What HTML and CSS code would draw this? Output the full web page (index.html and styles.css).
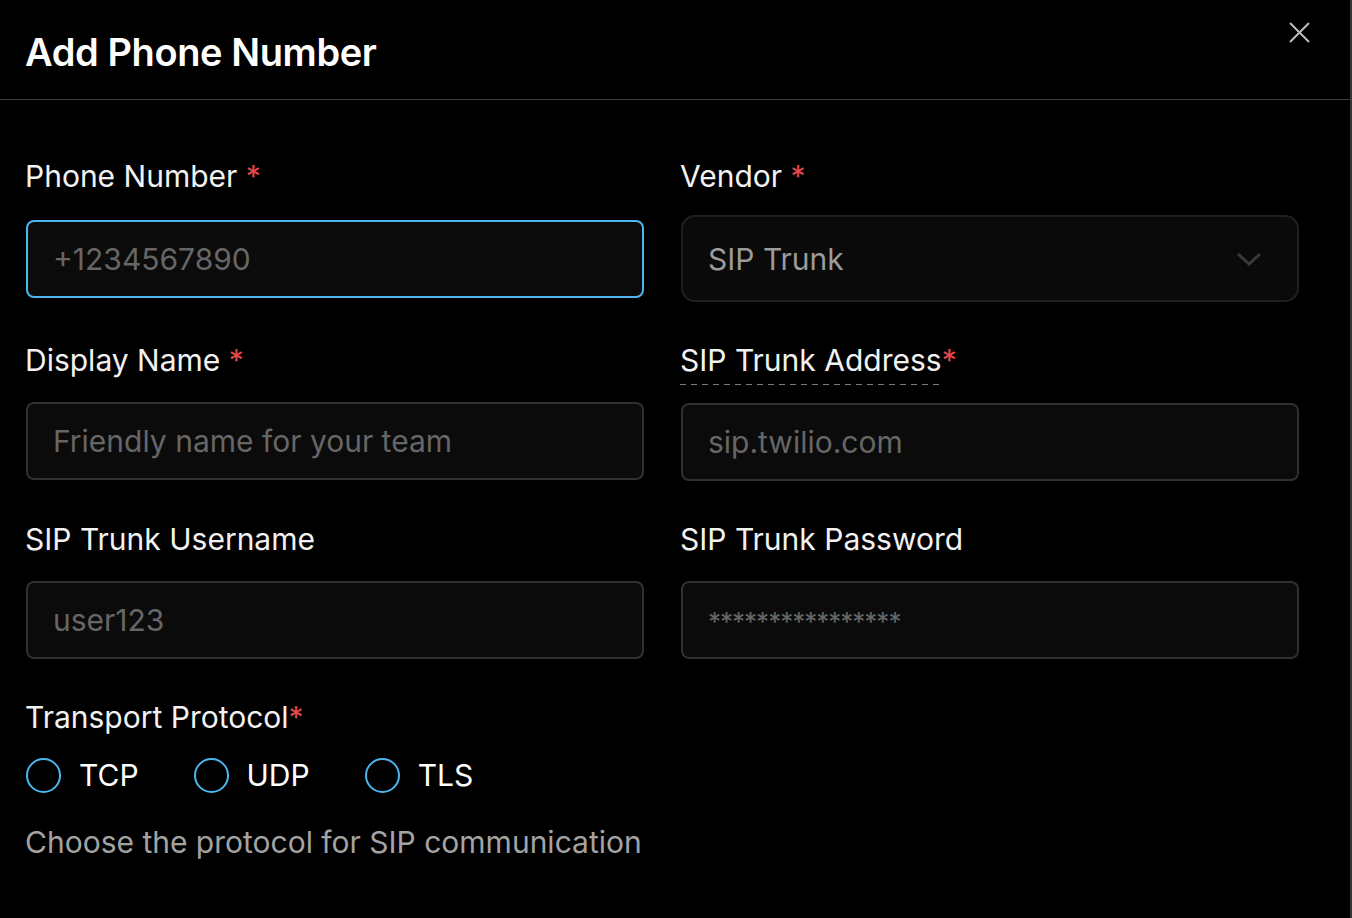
FILE: index.html
```html
<!DOCTYPE html>
<html>
    <head>
        <meta charset="utf-8" />
        <title>Add Phone Number</title>
        <link rel="stylesheet" href="styles.css">
    </head>
    <body>
        <div class="dialog">
            <div class="dialog-head">
                <h2 class="dialog-title">Add Phone Number</h2>
                <button type="button" class="close-btn" aria-label="Close">
                    <svg width="21" height="21" viewBox="0 0 21 21" fill="none">
                        <path d="M1 1L20 20M20 1L1 20" stroke="#bdbdbd" stroke-width="2"/>
                    </svg>
                </button>
            </div>
            <form class="phone-form">
                <div class="field">
                    <label class="field-label" for="phone">Phone Number <span class="req">*</span></label>
                    <input class="field-input is-focus" id="phone" type="text" placeholder="+1234567890">
                </div>
                <div class="field">
                    <label class="field-label">Vendor <span class="req">*</span></label>
                    <div class="select-box">
                        <span class="select-value">SIP Trunk</span>
                        <svg width="26" height="14" viewBox="0 0 26 14" fill="none">
                            <path d="M2 2L13 12L24 2" stroke="#3a3a3a" stroke-width="3"/>
                        </svg>
                    </div>
                </div>
                <div class="field">
                    <label class="field-label" for="display">Display Name <span class="req">*</span></label>
                    <input class="field-input" id="display" type="text" placeholder="Friendly name for your team">
                </div>
                <div class="field">
                    <label class="field-label field-label--hint" for="address"><span class="hint">SIP Trunk Address</span><span class="req">*</span></label>
                    <input class="field-input" id="address" type="text" placeholder="sip.twilio.com">
                </div>
                <div class="field">
                    <label class="field-label" for="username">SIP Trunk Username</label>
                    <input class="field-input" id="username" type="text" placeholder="user123">
                </div>
                <div class="field">
                    <label class="field-label" for="password">SIP Trunk Password</label>
                    <input class="field-input field-input--secret" id="password" type="text" placeholder="****************">
                </div>
                <div class="field field--wide">
                    <label class="field-label">Transport Protocol<span class="req">*</span></label>
                    <div class="radio-row">
                        <label class="radio-item"><span class="radio-dot"></span>TCP</label>
                        <label class="radio-item"><span class="radio-dot"></span>UDP</label>
                        <label class="radio-item"><span class="radio-dot"></span>TLS</label>
                    </div>
                    <p class="field-help">Choose the protocol for SIP communication</p>
                </div>
            </form>
        </div>
    </body>
</html>
```

FILE: styles.css
```css
* {
	padding: 0;
	margin: 0;
	box-sizing: border-box;
}
body {
	background-color: #000;
	font-family: Inter, "Liberation Sans", sans-serif;
	color: #f2f2f2;
}
.dialog {
	min-height: 100vh;
	border-right: 2px solid #363636;
}
.dialog-head {
	display: flex;
	justify-content: space-between;
	align-items: flex-start;
	padding: 22px 40px 25px 25px;
	border-bottom: 1px solid #3d3d3d;
}
.dialog-title {
	margin-top: 8px;
	font-size: 38px;
	line-height: 44px;
	font-weight: 600;
	letter-spacing: -0.4px;
	color: #fff;
}
.close-btn {
	width: 21px;
	height: 21px;
	border: 0;
	background: none;
	display: flex;
}
.phone-form {
	display: grid;
	grid-template-columns: 1fr 1fr;
	column-gap: 37px;
	row-gap: 40px;
	padding: 58px 51px 0 26px;
}
.field {
	display: flex;
	flex-direction: column;
}
.field--wide {
	grid-column: 1 / 3;
}
.field-label {
	font-size: 30px;
	line-height: 36px;
	color: #f2f2f2;
	margin-bottom: 24px;
	margin-left: -1px;
}
.field-label--hint {
	margin-bottom: 18px;
}
.hint {
	display: inline-block;
	padding-bottom: 7px;
	background: repeating-linear-gradient(to right, #7a7a7a 0 6px, transparent 6px 11px) left bottom / 100% 1px no-repeat;
}
.req {
	color: #e5484d;
}
.field-input {
	height: 78px;
	width: 100%;
	border: 2px solid #303030;
	border-radius: 8px;
	background-color: #0b0b0b;
	padding: 0 26px 0 25px;
	font-family: Inter, "Liberation Sans", sans-serif;
	font-size: 30px;
	color: #e0e0e0;
	outline: none;
}
.field-input::placeholder {
	color: #666;
}
.field-input--secret::placeholder {
	font-size: 26px;
	letter-spacing: -1px;
}
.is-focus {
	border-color: #4db5f0;
	margin-top: 2px;
}
.select-box {
	margin-top: -3px;
	height: 87px;
	border: 2px solid #1f1f1f;
	border-radius: 14px;
	background-color: #0a0a0a;
	padding: 0 35px 0 25px;
	display: flex;
	justify-content: space-between;
	align-items: center;
}
.select-value {
	font-size: 30px;
	color: #9b9b9b;
}
.radio-row {
	display: flex;
	gap: 55px;
	margin-top: -2px;
}
.radio-item {
	display: flex;
	align-items: center;
	gap: 18px;
	font-size: 30px;
	line-height: 36px;
	color: #fff;
}
.radio-dot {
	width: 35px;
	height: 35px;
	border: 2px solid #4db5f0;
	border-radius: 50%;
}
.field-help {
	margin-top: 31px;
	margin-left: -1px;
	font-size: 30px;
	line-height: 36px;
	color: #a3a3a3;
}
```
